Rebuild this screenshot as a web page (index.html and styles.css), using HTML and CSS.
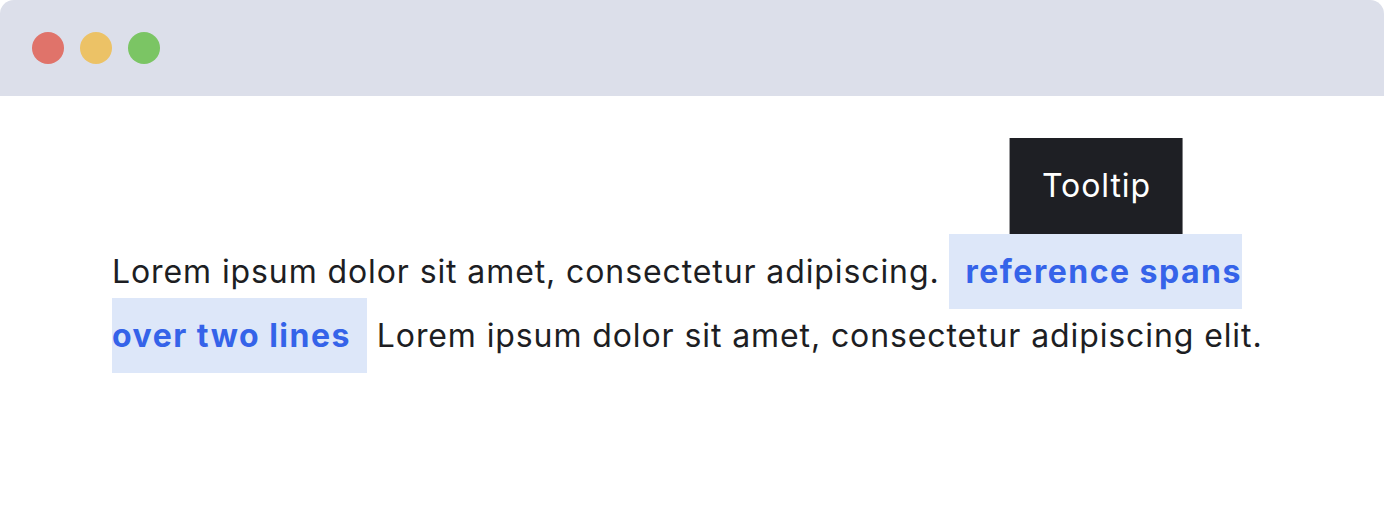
FILE: index.html
```html
<!DOCTYPE html>
<html lang="en">
<head>
<meta charset="utf-8">
<title>Tooltip</title>
<link rel="stylesheet" href="styles.css">
</head>
<body>
<div class="window">
  <div class="titlebar">
    <span class="dot dot-red"></span>
    <span class="dot dot-yellow"></span>
    <span class="dot dot-green"></span>
  </div>
  <div class="content">
    <p class="para">Lorem ipsum dolor sit amet, consectetur adipiscing. <span class="ref"><span class="anchor"><span class="tooltip">Tooltip</span></span>reference spans over two lines</span> Lorem ipsum dolor sit amet, consectetur adipiscing elit.</p>
  </div>
</div>
</body>
</html>
```
FILE: styles.css
```css
* { box-sizing: border-box; }
html, body { margin: 0; padding: 0; background: #ffffff; }
body { width: 1384px; height: 511px; overflow: hidden; }
.window {
  width: 1384px;
  height: 511px;
  border-radius: 14px;
  overflow: hidden;
  background: #ffffff;
  display: flex;
  flex-direction: column;
  font-family: Inter, "Noto Sans", sans-serif;
}
.titlebar {
  height: 96px;
  flex: none;
  background: #dcdfea;
  display: flex;
  align-items: center;
  gap: 16px;
  padding-left: 32px;
}
.dot { width: 32px; height: 32px; border-radius: 50%; display: block; }
.dot-red { background: #e0736a; }
.dot-yellow { background: #ecc266; }
.dot-green { background: #7bc564; }
.content {
  flex: 1;
  display: flex;
  align-items: center;
  padding: 0 112px;
}
.para {
  margin: 0;
  font-size: 32px;
  line-height: 64px;
  letter-spacing: 0.9px;
  color: #1d1e23;
}
.ref {
  position: relative;
  background: #dde7f9;
  color: #3563e9;
  font-weight: 700;
  letter-spacing: 1.5px;
  padding: 18px 16px;
}
.anchor {
  position: absolute;
  left: 0;
  top: 0;
  width: 294px;
  height: 0;
}
.tooltip {
  position: absolute;
  left: 50%;
  bottom: 0;
  transform: translateX(-50%);
  background: #1e1f24;
  color: #ffffff;
  font-weight: 400;
  font-size: 32px;
  line-height: 32px;
  letter-spacing: 0.9px;
  padding: 32px;
  white-space: nowrap;
}
```
